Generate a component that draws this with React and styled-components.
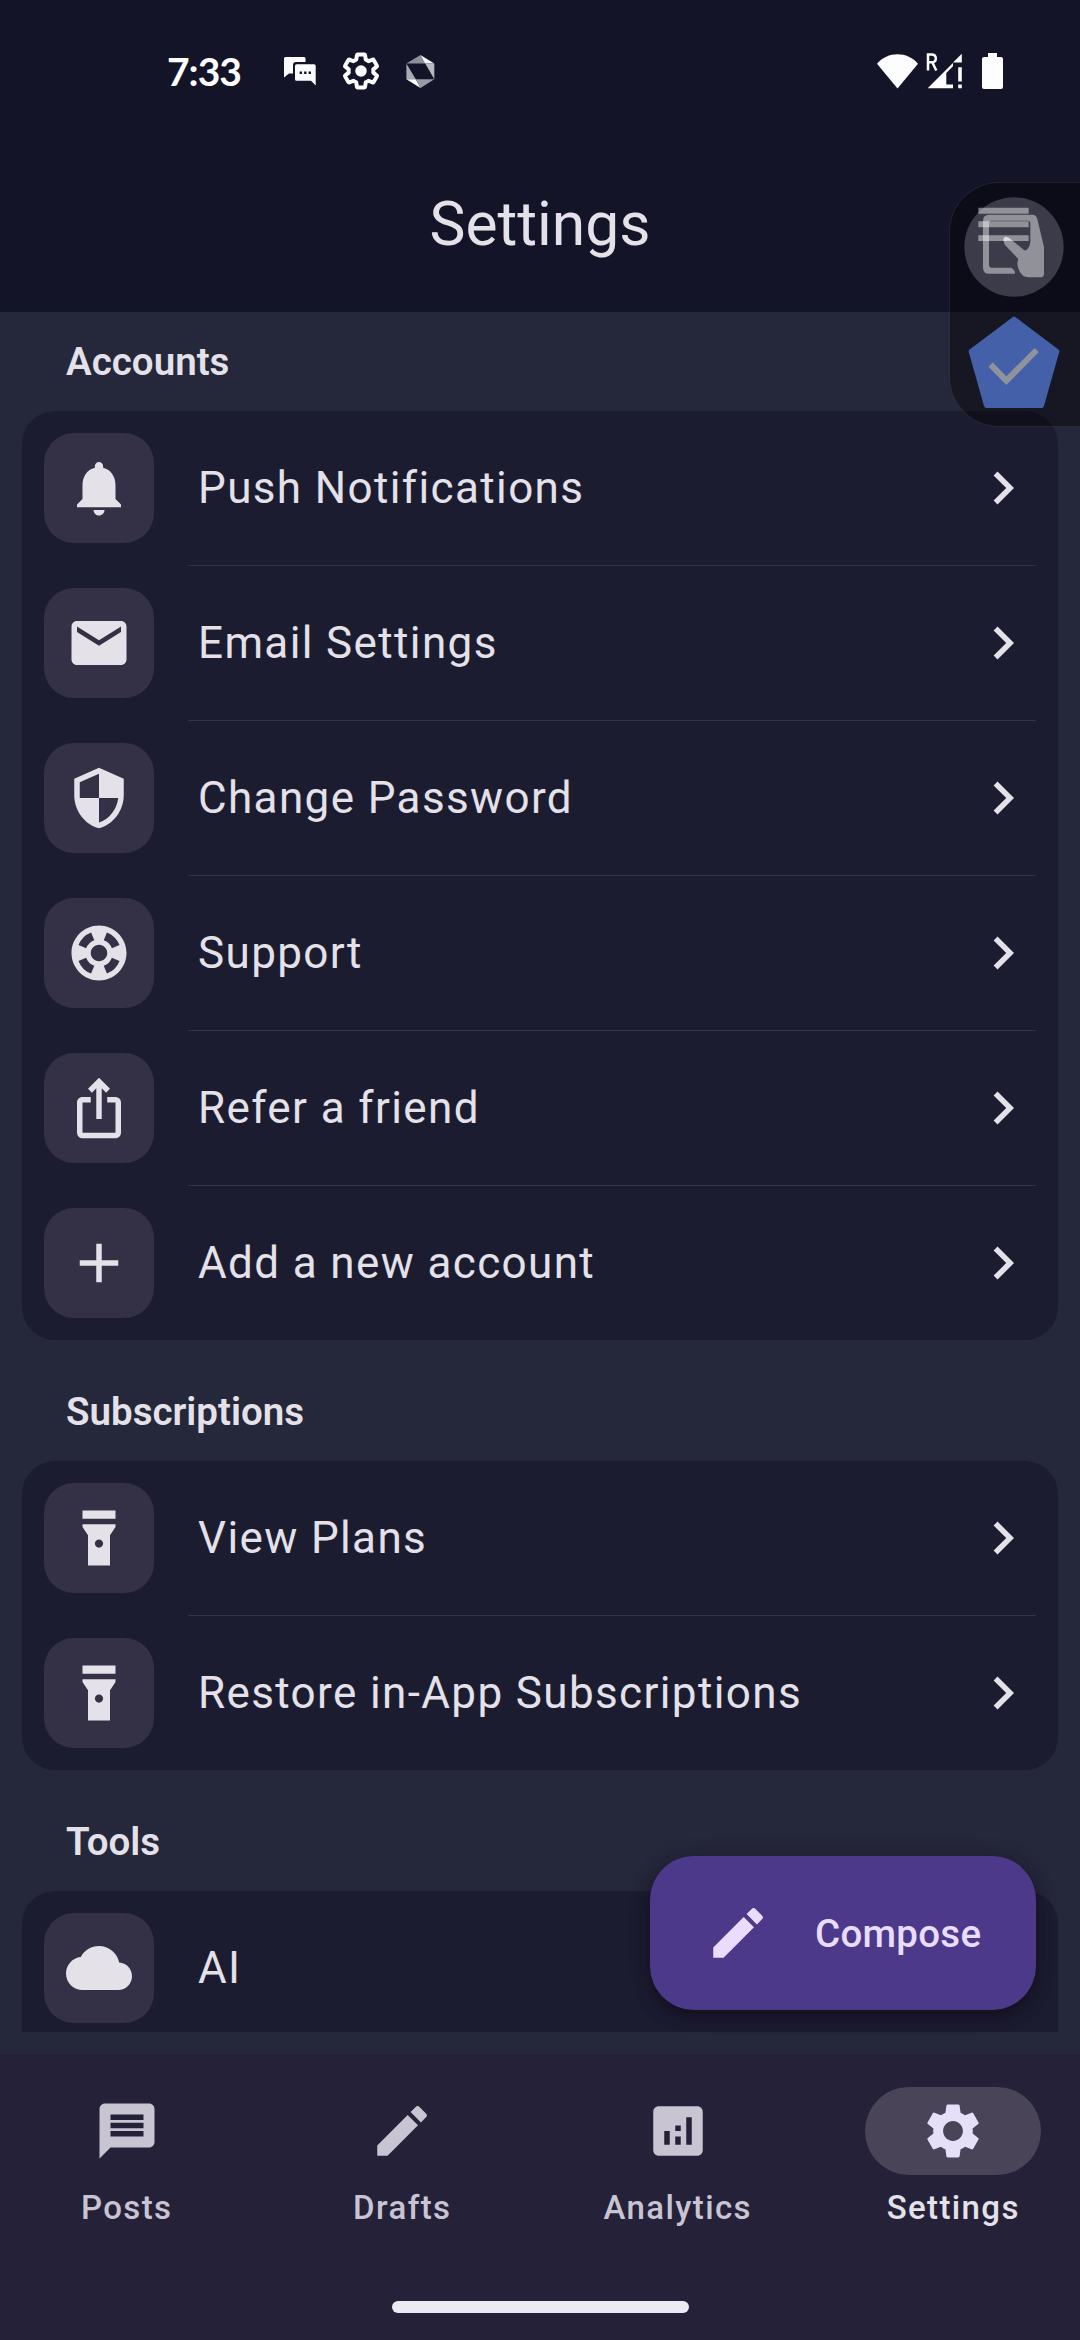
import React from "react";
import styled, { createGlobalStyle } from "styled-components";
import {
  MdNotifications,
  MdEmail,
  MdSecurity,
  MdSupport,
  MdIosShare,
  MdAdd,
  MdFlashlightOn,
  MdCloud,
  MdChevronRight,
  MdEdit,
  MdMessage,
  MdAnalytics,
  MdSettings,
} from "react-icons/md";

const GlobalStyle = createGlobalStyle`
  * { box-sizing: border-box; }
  body {
    margin: 0;
    background: #25273a;
    font-family: Roboto, "Noto Sans", sans-serif;
  }
`;

const Screen = styled.div`
  position: relative;
  display: flex;
  flex-direction: column;
  width: 1080px;
  height: 2340px;
  overflow: hidden;
  background: #25273a;
  color: #e4e1e9;
`;

const Header = styled.header`
  flex: none;
  height: 312px;
  background: #131427;
`;

const StatusBar = styled.div`
  display: flex;
  align-items: center;
  justify-content: space-between;
  height: 136px;
  padding: 6px 77px 0 167px;
`;

const StatusGroup = styled.div`
  display: flex;
  align-items: center;
  gap: ${(p) => p.$gap}px;
`;

const Clock = styled.span`
  width: 93px;
  font-family: Lato, sans-serif;
  font-size: 39px;
  font-weight: 700;
  line-height: 48px;
  letter-spacing: -1px;
  white-space: nowrap;
  color: #fdfdff;
`;

const TitleBar = styled.div`
  display: flex;
  align-items: center;
  justify-content: center;
  height: 176px;
`;

const Title = styled.h1`
  margin: 0;
  font-size: 60.5px;
  font-weight: 400;
  line-height: 77px;
`;

const Content = styled.main`
  flex: none;
  height: 1720px;
  padding: 0 22px;
  overflow: hidden;
`;

const Section = styled.section`
  & + & {
    margin-top: 22px;
  }
`;

const SectionTitle = styled.h2`
  display: flex;
  align-items: center;
  height: 99px;
  margin: 0;
  padding-left: 44px;
  font-size: 38.5px;
  font-weight: 600;
  letter-spacing: 0;
`;

const Card = styled.div`
  border-radius: 33px;
  background: #1c1c31;
`;

const Row = styled.div`
  display: flex;
  align-items: center;
  height: 154px;
  padding: 0 22px;
`;

const Tile = styled.div`
  display: flex;
  align-items: center;
  justify-content: center;
  width: 110px;
  height: 110px;
  border-radius: 30px;
  background: #343146;
`;

const RowLabel = styled.span`
  flex: 1;
  padding-left: 44px;
  font-size: 44px;
  line-height: 66px;
  letter-spacing: 1.375px;
`;

const Divider = styled.div`
  height: 1px;
  margin: 0 22px 0 166px;
  background: #33344a;
`;

const Fab = styled.button`
  position: absolute;
  top: 1856px;
  right: 44px;
  display: flex;
  align-items: center;
  width: 386px;
  height: 154px;
  padding: 0 0 0 55px;
  border: 0;
  border-radius: 44px;
  background: #4d3989;
  box-shadow: 0 8px 14px rgba(18, 10, 24, 0.5), 0 2px 22px rgba(18, 10, 24, 0.2);
  color: #e8ddff;
  font-family: inherit;
  font-size: 38.5px;
  font-weight: 500;
  letter-spacing: 0.27px;
`;

const FabLabel = styled.span`
  padding-left: 44px;
`;

const NavBar = styled.nav`
  display: flex;
  gap: 22px;
  height: 220px;
  background: #242139;
`;

const NavItem = styled.div`
  flex: 1;
  display: flex;
  flex-direction: column;
  align-items: center;
  padding-top: 33px;
  color: ${(p) => (p.$active ? "#e4e1e9" : "#c9c4d2")};
`;

const Indicator = styled.div`
  display: flex;
  align-items: center;
  justify-content: center;
  width: 176px;
  height: 88px;
  border-radius: 44px;
  background: ${(p) => (p.$active ? "#494458" : "transparent")};
  color: ${(p) => (p.$active ? "#e6dff8" : "#c9c4d2")};
`;

const NavLabel = styled.span`
  margin-top: 11px;
  font-size: 33px;
  font-weight: 500;
  line-height: 44px;
  letter-spacing: 1.375px;
`;

const ContentGap = styled.div`
  flex: none;
  height: 22px;
`;

const GestureArea = styled.div`
  display: flex;
  justify-content: center;
  height: 66px;
  padding-top: 27px;
  background: #242139;
`;

const GestureHandle = styled.div`
  width: 297px;
  height: 12px;
  border-radius: 6px;
  background: #ecebf4;
`;

const FloatingPanel = styled.aside`
  position: absolute;
  top: 182px;
  right: -4px;
  display: flex;
  flex-direction: column;
  gap: 19px;
  width: 135px;
  height: 245px;
  padding: 14px 0 0 14px;
  border: 1px solid rgba(255, 255, 255, 0.09);
  border-radius: 50px 0 0 50px;
  background: rgba(0, 0, 0, 0.4);
`;

const ChatBubbles = () => (
  <svg width="32" height="29" viewBox="0 0 32 29" fill="#fdfdff">
    <path d="M1.500 0H20q1.500 0 1.500 1.500V5H12q-3 0-3 3v8.500H5L0 20.500V1.500Q0 0 1.500 0z" />
    <path
      fillRule="evenodd"
      d="M12.500 7.300H30q1.700 0 1.700 1.700V28.500L27 23.700H12.500q-1.500 0-1.500-1.500V9q0-1.700 1.500-1.700zM15.600 14.500v2.400H18v-2.400zM20.100 14.500v2.400h2.400v-2.400zM24.600 14.500v2.400H27v-2.400z"
    />
  </svg>
);

const GearOutline = () => (
  <svg width="42" height="42" viewBox="0 0 24 24" fill="none">
    <path
      stroke="#fdfdff"
      strokeWidth="2.3"
      strokeLinejoin="round"
      transform="translate(12 12) scale(0.98) translate(-12 -12)"
      d="M19.140 12.940c.04-.3.06-.61.06-.94 0-.32-.02-.64-.07-.94l2.030-1.580c.18-.14.23-.41.12-.61l-1.920-3.320c-.12-.22-.37-.29-.59-.22l-2.390.96c-.5-.38-1.030-.7-1.620-.94l-.36-2.540c-.04-.24-.24-.41-.48-.41h-3.840c-.24 0-.43.17-.47.41l-.36 2.540c-.59.24-1.130.57-1.620.94l-2.390-.96c-.22-.08-.47 0-.59.22L2.740 8.870c-.12.21-.08.47.12.61l2.030 1.580c-.05.3-.09.63-.09.94s.02.64.07.94l-2.030 1.580c-.18.14-.23.41-.12.61l1.920 3.320c.12.22.37.29.59.22l2.390-.96c.5.38 1.030.7 1.620.94l.36 2.540c.05.24.24.41.48.41h3.840c.24 0 .44-.17.47-.41l.36-2.540c.59-.24 1.130-.56 1.620-.94l2.390.96c.22.08.47 0 .59-.22l1.920-3.320c.12-.22.07-.47-.12-.61l-2.010-1.580z"
    />
    <circle cx="12" cy="12" r="3.300" fill="#fdfdff" />
  </svg>
);

const Hexagon = () => (
  <svg width="29" height="33" viewBox="22 45 84 98">
    <path d="M64 45L22 70H80z" fill="#8f8f9b" />
    <path d="M64 45L105 70H78z" fill="#f4f4f8" />
    <path d="M78 70H105V117z" fill="#b9b9c4" />
    <path d="M22 70V117H50z" fill="#a9a9b5" />
    <path d="M22 117H50L64 143z" fill="#fdfdff" />
    <path d="M50 117H105L64 143z" fill="#9a9aa6" />
  </svg>
);

const Wifi = () => (
  <svg width="41" height="35" viewBox="0 0 41 35" fill="#fdfdff">
    <path d="M0 9.700C5.500 3.600 12.500 0.300 20.500 0.300S35.500 3.600 41 9.700L20.500 34.500z" />
  </svg>
);

const Signal = () => (
  <svg width="37" height="37" viewBox="0 0 37 37">
    <path
      d="M2 17.500V1.500H5.500q4.300 0 4.300 3.900t-4.300 3.900H2.200M6.300 9.300L10.300 17.500"
      fill="none"
      stroke="#fdfdff"
      strokeWidth="2.500"
    />
    <path
      d="M1.700 35.300L27 10V13.200L20.300 20V31.500H27V35.300zM27 9.500L35.800 0.700V9.500zM32.200 14.200H35.800V28.500H32.200zM32.200 31.600H35.800V35.300H32.200z"
      fill="#fdfdff"
    />
  </svg>
);

const Battery = () => (
  <svg width="21" height="36" viewBox="0 0 21 36" fill="#fdfdff">
    <path d="M6 0h9v4h4q2 0 2 2v28q0 2-2 2H2q-2 0-2-2V6q0-2 2-2h4z" />
  </svg>
);

const HandTablet = () => (
  <svg width="100" height="100" viewBox="131 110 300 300">
    <circle cx="281" cy="260" r="149" fill="#3b3b49" />
    <g fill="#ffffff" fillOpacity="0.44">
      <path d="M174 142H325V160H174zM174 183H325V201H174zM174 225H325V242H174z" />
      <path d="M206 163H335Q348 163 351 176L371 260V340Q371 351 360 351H325Q305 351 296 330C290 315 290 305 294 296L254 254Q246 240 251 232Q258 226 268 234L312 270Q322 272 328 255Q331 245 330 235V190Q330 181 322 181H214Q206 181 206 190V313Q206 322 214 322H272Q284 326 284 340H206Q188 340 188 322V181Q188 163 206 163Z" />
      <path d="M251 232Q258 226 274 240L250 242Q249 236 251 232z" />
    </g>
  </svg>
);

const PentagonCheck = () => (
  <svg width="100" height="92" viewBox="131 469 300 276">
    <path
      d="M281 478L410 575L364 738H198L152 575z"
      fill="#4460a8"
      stroke="#4460a8"
      strokeWidth="14"
      strokeLinejoin="round"
    />
    <path d="M211 615L258 663L349 571" fill="none" stroke="#90939d" strokeWidth="18" />
  </svg>
);

const sections = [
  {
    title: "Accounts",
    rows: [
      [MdNotifications, "Push Notifications"],
      [MdEmail, "Email Settings"],
      [MdSecurity, "Change Password"],
      [MdSupport, "Support"],
      [MdIosShare, "Refer a friend"],
      [MdAdd, "Add a new account"],
    ],
  },
  {
    title: "Subscriptions",
    rows: [
      [MdFlashlightOn, "View Plans"],
      [MdFlashlightOn, "Restore in-App Subscriptions"],
    ],
  },
  {
    title: "Tools",
    rows: [
      [MdCloud, "AI"],
      [MdCloud, ""],
    ],
  },
];

const tabs = [
  [MdMessage, "Posts"],
  [MdEdit, "Drafts"],
  [MdAnalytics, "Analytics"],
  [MdSettings, "Settings"],
];

export default function App() {
  return (
    <Screen>
      <GlobalStyle />
      <Header>
        <StatusBar>
          <StatusGroup $gap={24}>
            <Clock>7:33</Clock>
            <ChatBubbles />
            <GearOutline />
            <Hexagon />
          </StatusGroup>
          <StatusGroup $gap={19}>
            <StatusGroup $gap={8}>
              <Wifi />
              <Signal />
            </StatusGroup>
            <Battery />
          </StatusGroup>
        </StatusBar>
        <TitleBar>
          <Title>Settings</Title>
        </TitleBar>
      </Header>
      <Content>
        {sections.map((section) => (
          <Section key={section.title}>
            <SectionTitle>{section.title}</SectionTitle>
            <Card>
              {section.rows.map(([Icon, label], i) => (
                <React.Fragment key={i}>
                  {i > 0 && <Divider />}
                  <Row>
                    <Tile>
                      <Icon size={66} />
                    </Tile>
                    <RowLabel>{label}</RowLabel>
                    <MdChevronRight size={66} />
                  </Row>
                </React.Fragment>
              ))}
            </Card>
          </Section>
        ))}
      </Content>
      <ContentGap />
      <NavBar>
        {tabs.map(([Icon, label]) => (
          <NavItem key={label} $active={label === "Settings"}>
            <Indicator $active={label === "Settings"}>
              <Icon size={66} />
            </Indicator>
            <NavLabel>{label}</NavLabel>
          </NavItem>
        ))}
      </NavBar>
      <GestureArea>
        <GestureHandle />
      </GestureArea>
      <Fab>
        <MdEdit size={66} />
        <FabLabel>Compose</FabLabel>
      </Fab>
      <FloatingPanel>
        <HandTablet />
        <PentagonCheck />
      </FloatingPanel>
    </Screen>
  );
}
